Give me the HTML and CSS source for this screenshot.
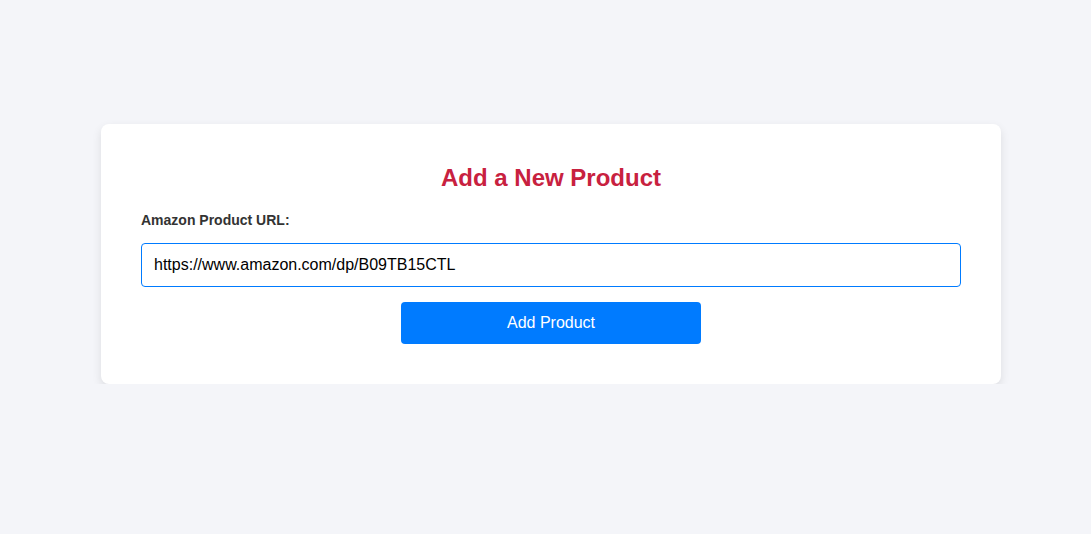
FILE: index.html
```html
<!DOCTYPE html>
<html lang="en">
<head>
<meta charset="utf-8">
<title>Add a New Product</title>
<link rel="stylesheet" href="styles.css">
</head>
<body>
<main class="page">
  <form class="card">
    <h2 class="title">Add a New Product</h2>
    <label class="label" for="url">Amazon Product URL:</label>
    <input class="input" id="url" type="text" value="https://www.amazon.com/dp/B09TB15CTL">
    <button class="button" type="button">Add Product</button>
  </form>
</main>
</body>
</html>
```
FILE: styles.css
```css
html, body {
  margin: 0;
  padding: 0;
  background: #f4f5f9;
  font-family: "Liberation Sans", Arial, sans-serif;
}
.page {
  display: flex;
  justify-content: center;
  padding: 124px 0 0 11px;
}
.card {
  box-sizing: border-box;
  width: 900px;
  background: #fff;
  border-radius: 8px;
  box-shadow: 0 4px 10px rgba(0, 0, 0, 0.1);
  padding: 40px;
  display: flex;
  flex-direction: column;
}
.title {
  margin: 0 0 20px;
  text-align: center;
  color: #c8213f;
  font-size: 24px;
  line-height: 28px;
  font-weight: bold;
}
.label {
  display: block;
  font-size: 14px;
  line-height: 16px;
  font-weight: bold;
  color: #333;
  margin-bottom: 15px;
}
.input {
  box-sizing: border-box;
  width: 100%;
  height: 44px;
  border: 1px solid #007bff;
  border-radius: 4px;
  padding: 0 12px;
  font-family: "Liberation Sans", Arial, sans-serif;
  font-size: 16px;
  color: #000;
  outline: none;
  margin: 0 0 15px;
}
.button {
  align-self: center;
  width: 300px;
  height: 42px;
  border: none;
  border-radius: 4px;
  background: #007bff;
  color: #fff;
  font-family: "Liberation Sans", Arial, sans-serif;
  font-size: 16px;
  cursor: pointer;
}
```
